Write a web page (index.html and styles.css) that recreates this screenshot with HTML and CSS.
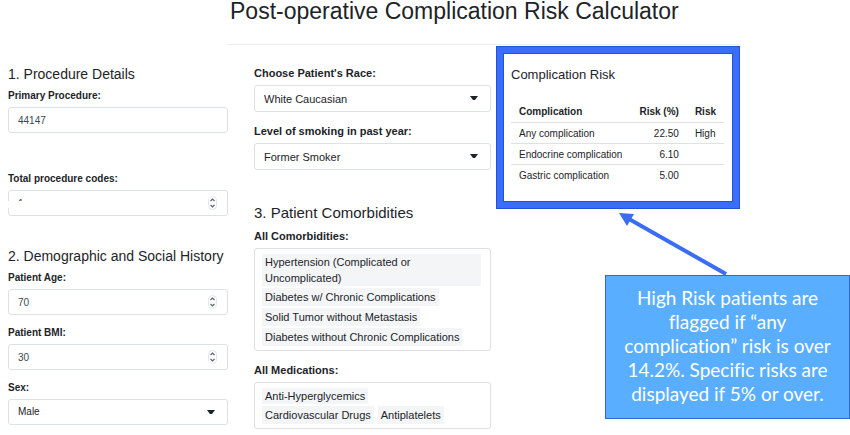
FILE: index.html
```html
<!DOCTYPE html>
<html lang="en">
<head>
<meta charset="utf-8">
<title>Post-operative Complication Risk Calculator</title>
<link rel="stylesheet" href="styles.css">
</head>
<body>
<header class="page-header">
  <h1>Post-operative Complication Risk Calculator</h1>
</header>
<main class="columns">
  <form class="details">
    <h2>1. Procedure Details</h2>
    <div class="field field-spaced">
      <label for="procedure">Primary Procedure:</label>
      <input id="procedure" type="text" value="44147">
    </div>
    <div class="field">
      <label for="codes">Total procedure codes:</label>
      <div class="redacted"><input id="codes" type="number" value="1"></div>
    </div>
    <h2 class="later">2. Demographic and Social History</h2>
    <div class="field">
      <label for="age">Patient Age:</label>
      <input id="age" type="number" value="70">
    </div>
    <div class="field">
      <label for="bmi">Patient BMI:</label>
      <input id="bmi" type="number" value="30">
    </div>
    <div class="field">
      <label for="sex">Sex:</label>
      <select id="sex"><option>Male</option></select>
    </div>
  </form>

  <form class="history">
    <div class="field">
      <label for="race">Choose Patient's Race:</label>
      <select id="race"><option>White Caucasian</option></select>
    </div>
    <div class="field">
      <label for="smoking">Level of smoking in past year:</label>
      <select id="smoking"><option>Former Smoker</option></select>
    </div>
    <h2 class="later">3. Patient Comorbidities</h2>
    <div class="field">
      <h3 id="comorbidities">All Comorbidities:</h3>
      <ul class="tags" aria-labelledby="comorbidities">
        <li>Hypertension (Complicated or Uncomplicated)</li>
        <li>Diabetes w/ Chronic Complications</li>
        <li>Solid Tumor without Metastasis</li>
        <li>Diabetes without Chronic Complications</li>
      </ul>
    </div>
    <div class="field">
      <h3 id="medications">All Medications:</h3>
      <ul class="tags" aria-labelledby="medications">
        <li>Anti-Hyperglycemics</li>
        <li>Cardiovascular Drugs</li>
        <li>Antiplatelets</li>
      </ul>
    </div>
  </form>

  <div class="results">
    <section class="risk">
      <h2>Complication Risk</h2>
      <table>
        <thead>
          <tr><th>Complication</th><th class="num">Risk (%)</th><th>Risk</th></tr>
        </thead>
        <tbody>
          <tr><td>Any complication</td><td class="num">22.50</td><td>High</td></tr>
          <tr><td>Endocrine complication</td><td class="num">6.10</td><td></td></tr>
          <tr><td>Gastric complication</td><td class="num">5.00</td><td></td></tr>
        </tbody>
      </table>
    </section>
    <svg class="arrow" width="112" height="64" viewBox="0 0 112 64" aria-hidden="true">
      <path d="M10 7 L107 62" stroke="#3a6cf4" stroke-width="4"/>
      <path d="M0 1 L15 2 L8 14 Z" fill="#3a6cf4"/>
    </svg>
    <p class="callout">High Risk patients are<br>flagged if “any<br>complication” risk is over<br>14.2%. Specific risks are<br>displayed if 5% or over.</p>
  </div>
</main>
</body>
</html>
```

FILE: styles.css
```css
* {
  box-sizing: border-box;
}

body {
  margin: 0;
  background: #fff;
  color: #1c2428;
  font: 11px/16px "Liberation Sans", Arial, sans-serif;
}

h1,
h2,
h3,
p,
ul {
  margin: 0;
}

.page-header {
  height: 45px;
  margin: 0 110px 0 227px;
  border-bottom: 1px solid #ededf0;
}

h1 {
  padding-left: 3px;
  font-size: 23px;
  line-height: 22px;
  font-weight: 400;
  white-space: nowrap;
}

h2 {
  font-size: 14px;
  line-height: 20px;
  font-weight: 400;
}

h3,
label {
  display: block;
  margin-bottom: 4px;
  font-size: inherit;
  line-height: 16px;
  font-weight: 700;
}

.columns {
  display: grid;
  grid-template-columns: 246fr 242fr 354fr;
  padding-left: 8px;
}

.details {
  padding: 19px 26px 0 0;
  font-size: 10px;
}

.history {
  padding: 20px 5px 0 0;
}

.details label {
  margin-bottom: 3px;
}

.details .field + .field {
  margin-top: 10px;
}

.history .field + .field {
  margin-top: 11px;
}

.details h2 {
  margin-bottom: 4px;
}

.details .field-spaced {
  margin-bottom: 38px;
}

.details .later {
  margin-top: 30px;
}

.history h2 {
  margin: 33px 0 5px;
  font-size: 15px;
}

input,
select {
  display: block;
  width: 100%;
  height: 26px;
  padding: 0 9px;
  border: 1px solid #dbe1e4;
  border-radius: 3px;
  background: #fff no-repeat;
  color: #3c4a50;
  font: inherit;
  appearance: none;
}

select {
  color: #1c2428;
  background-image: url("data:image/svg+xml,%3Csvg xmlns='http://www.w3.org/2000/svg' width='8' height='5'%3E%3Cpath d='M0 0H8L5 4H3Z' fill='%231c2428'/%3E%3C/svg%3E");
  background-position: right 12px center;
}

.history select {
  height: 27px;
}

input[type="number"] {
  appearance: textfield;
  background-image: url("data:image/svg+xml,%3Csvg xmlns='http://www.w3.org/2000/svg' width='9' height='14'%3E%3Crect x='.5' y='.5' width='8' height='13' rx='4' fill='%23fff' stroke='%23e2e5e7'/%3E%3Cpath d='M2.5 5L4.500 3L6.500 5M2.500 9L4.500 11L6.500 9' fill='none' stroke='%2356636a' stroke-width='1.200'/%3E%3C/svg%3E");
  background-position: right 10px center;
}

input::-webkit-inner-spin-button {
  appearance: none;
}

/* White strip that hides the code count */
.redacted {
  position: relative;
}

.redacted::after {
  content: "";
  position: absolute;
  top: 11px;
  left: -2px;
  width: 32px;
  height: 7px;
  background: #fff;
}

.tags {
  display: flex;
  flex-wrap: wrap;
  gap: 2px 4px;
  padding: 5px 9px 4px 7px;
  border: 1px solid #dcdfe4;
  border-radius: 3px;
  list-style: none;
}

.tags li {
  padding: 1px 3px;
  background: #f3f5f7;
}

.tags li:first-child {
  padding-block: 0;
}

.results {
  padding-top: 1px;
}

.risk {
  width: 69%;
  padding: 12px 9px 17px 8px;
  border: 7px solid #3a6dfa;
  outline: 1px solid #2450dc;
  outline-offset: -1px;
  box-shadow: inset 0 0 0 1px #2450dc;
}

.risk h2 {
  font-size: 13px;
}

table {
  width: 100%;
  margin-top: 16px;
  border-collapse: collapse;
  font-size: 10px;
}

th,
td {
  height: 21px;
  padding: 2px 8px 0;
  text-align: left;
  white-space: nowrap;
}

td {
  border-top: 1px solid #dfe2e5;
}

.num {
  text-align: right;
}

.arrow {
  display: block;
  margin: 3px 0 -1px 123px;
}

.callout {
  margin-left: 109px;
  padding: 10px 0 12px;
  border: 1px solid #2f68d8;
  background: #5aaeff;
  color: #fff;
  font: 19px/24px Lato, sans-serif;
  font-variant-ligatures: none;
  text-align: center;
  white-space: nowrap;
}
```
